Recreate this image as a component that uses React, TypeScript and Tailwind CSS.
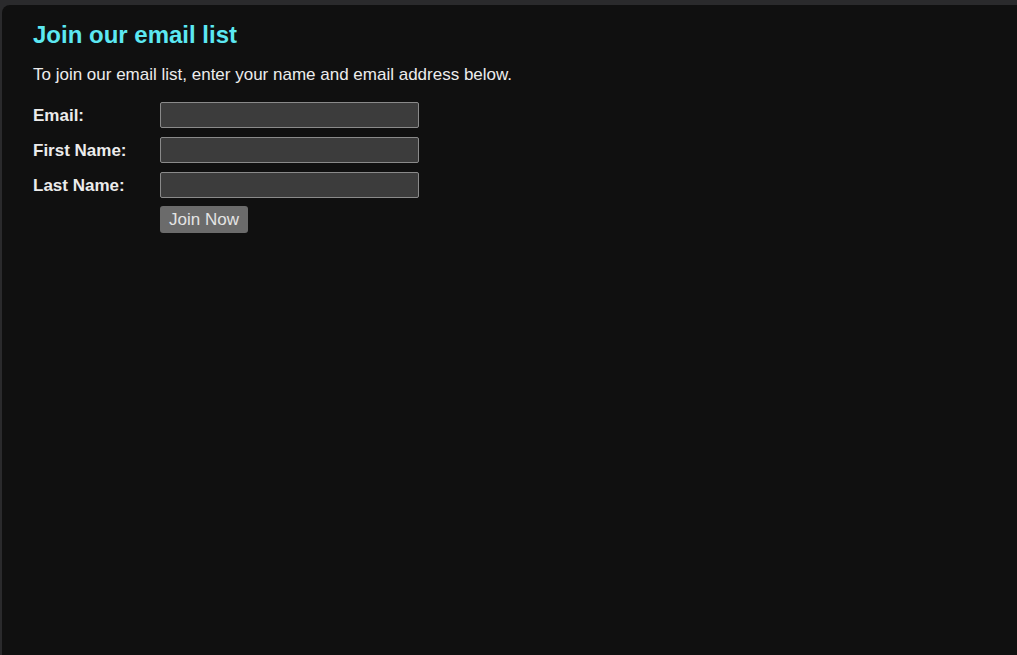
import { useState } from "react";

const fields = [
  { key: "email", label: "Email:" },
  { key: "firstName", label: "First Name:" },
  { key: "lastName", label: "Last Name:" },
];

const App = () => {
  const [values, setValues] = useState<Record<string, string>>({});

  return (
    <div className="min-h-[655px] bg-[#2a2a2c] pt-[5px] pl-[2px] font-['Liberation_Sans',Arial,sans-serif]">
      <div className="min-h-[650px] rounded-tl-[8px] bg-[#101010] pl-[31px] pt-[16px]">
        <h1 className="text-[24px] leading-[28px] font-bold text-[#5ce8f2]">
          Join our email list
        </h1>
        <p className="mt-[16px] text-[17px] leading-[20px] text-[#ececec]">
          To join our email list, enter your name and email address below.
        </p>
        {/* form */}
        <form
          className="mt-[17px] grid grid-cols-[127px_259px] gap-y-[9px]"
          onSubmit={(e) => e.preventDefault()}
        >
          {fields.map((f) => (
            <div key={f.key} className="contents">
              <label className="flex items-center pt-[1px] text-[17px] leading-[20px] font-bold text-[#ececec]">
                {f.label}
              </label>
              <input
                value={values[f.key] || ""}
                onChange={(e) =>
                  setValues((prev) => ({ ...prev, [f.key]: e.target.value }))
                }
                className="h-[26px] rounded-[2px] border border-[#8a8a8a] bg-[#3c3c3c] px-1 text-[#eee] outline-none"
              />
            </div>
          ))}
          <div />
          <div className="-mt-[1px]">
            <button
              type="submit"
              className="h-[27px] w-[88px] rounded-[3px] bg-[#6b6b6b] text-[17px] leading-[20px] text-[#e4e4e4]"
            >
              Join Now
            </button>
          </div>
        </form>
      </div>
    </div>
  );
};

export default App;
